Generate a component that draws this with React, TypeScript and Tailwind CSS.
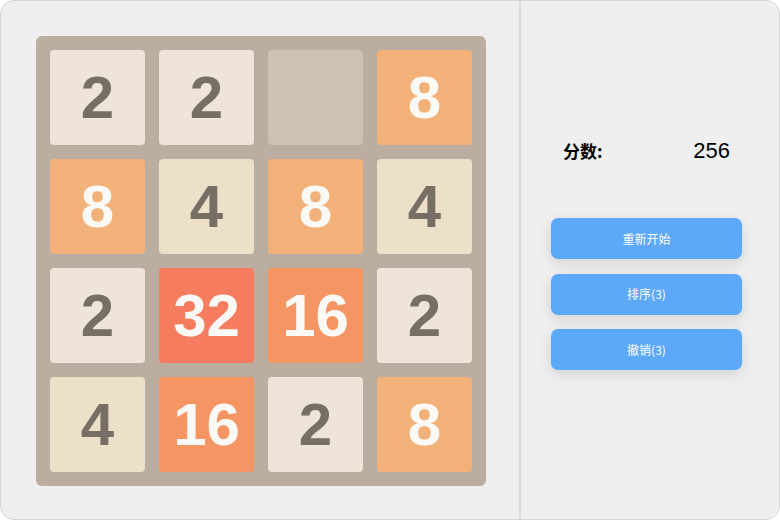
import React from "react";

const grid: number[][] = [
  [2, 2, 0, 8],
  [8, 4, 8, 4],
  [2, 32, 16, 2],
  [4, 16, 2, 8],
];

function tileClass(v: number): string {
  switch (v) {
    case 0:
      return "bg-[#cdc1b4]";
    case 2:
      return "bg-[#eee4da] text-[#776e65]";
    case 4:
      return "bg-[#ede0c8] text-[#776e65]";
    case 8:
      return "bg-[#f2b179] text-[#fbf9f6]";
    case 16:
      return "bg-[#f59563] text-[#fbf9f6]";
    case 32:
      return "bg-[#f67c5f] text-[#fbf9f6]";
    default:
      return "bg-[#edcf72] text-[#fbf9f6]";
  }
}

export default function App() {
  return (
    <div className="w-[780px] h-[520px] bg-white" style={{ fontFamily: '"Liberation Sans", "Noto Sans CJK SC", sans-serif' }}>
      <div className="w-full h-full flex rounded-[14px] border border-[#d6d6d6] bg-[#efefef] overflow-hidden">
        <div className="w-[518px] h-full flex items-center justify-center">
          <div className="w-[450px] h-[450px] bg-[#bbada0] rounded-[6px] p-[14px] grid grid-cols-4 gap-[14px] translate-x-[1px] translate-y-[1px]">
            {grid.flat().map((v, i) => (
              <div
                key={i}
                className={`w-[95px] h-[95px] rounded-[4px] flex items-center justify-center font-bold text-[60px] leading-none ${tileClass(v)}`}
              >
                {v !== 0 ? v : ""}
              </div>
            ))}
          </div>
        </div>
        <div className="w-[2px] h-full bg-[#d9d9d9]" />
        <div className="flex-1 h-full flex flex-col pl-[30px] pt-[133px]">
          <div className="flex items-center w-[179px] pl-[12px] justify-between">
            <span className="text-[17px] font-bold text-black" style={{ fontFamily: '"Noto Sans CJK SC", "Liberation Sans", sans-serif' }}>
              分数:
            </span>
            <span className="text-[22px] text-black">256</span>
          </div>
          <div className="flex flex-col gap-[14.5px] mt-[51px]">
            {["重新开始", "排序(3)", "撤销(3)"].map((t) => (
              <button
                key={t}
                className="w-[191px] h-[41px] rounded-[7px] bg-[#5ca8f9] text-white text-[12px] shadow-[0_4px_14px_rgba(0,0,0,0.12)] flex items-center justify-center"
                style={{ fontFamily: '"Noto Sans CJK SC", "Liberation Sans", sans-serif' }}
              >
                {t}
              </button>
            ))}
          </div>
        </div>
      </div>
    </div>
  );
}
